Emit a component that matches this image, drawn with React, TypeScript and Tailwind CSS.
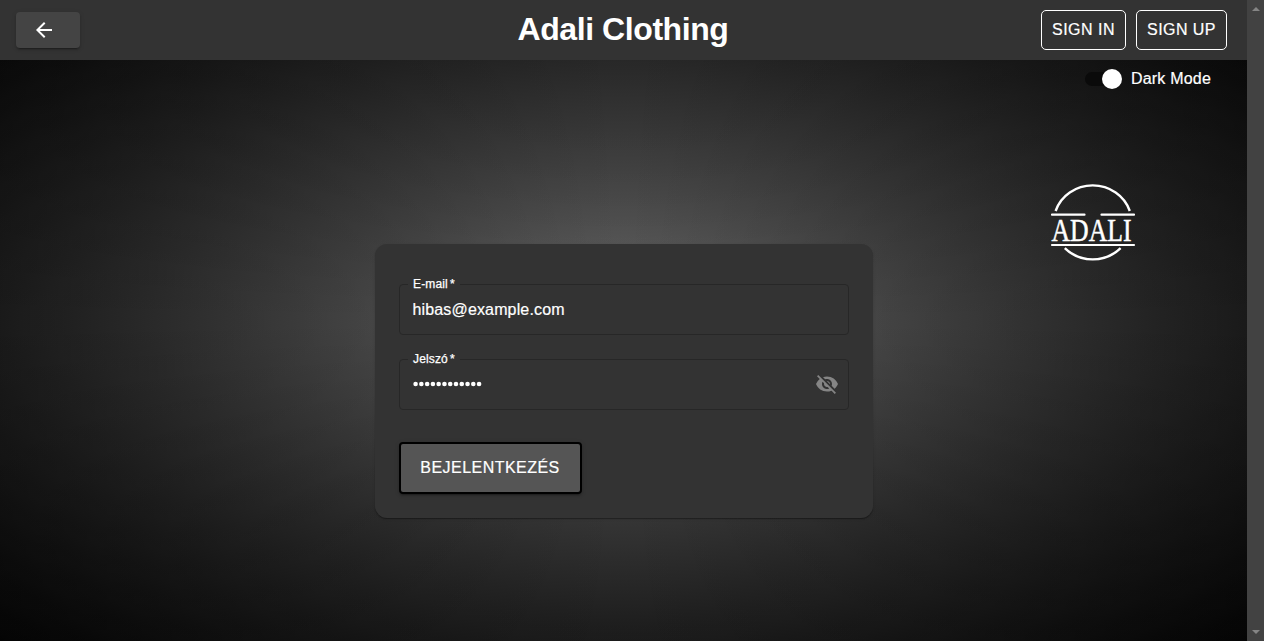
import type { ReactNode } from "react";
import { MdArrowBack, MdVisibilityOff } from "react-icons/md";

function Field({ label, children }: { label: string; children: ReactNode }) {
  return (
    <fieldset className="h-[56px] w-[450px] rounded-[4px] border border-[#272727] pl-[8px] pr-[9px]">
      <legend className="flex h-[11px] gap-[2px] pl-[5.500px] pr-[5px] text-[12px] leading-[11px] text-white [-webkit-text-stroke:0.25px_white]">
        <span className="tracking-[0.15px]">{label}</span>
        <span>*</span>
      </legend>
      <div className="flex h-[40px] items-center justify-between pl-[5px]">{children}</div>
    </fieldset>
  );
}

export default function App() {
  return (
    <div className="flex h-[641px] w-[1264px] overflow-hidden bg-black font-['Liberation_Sans',Arial,sans-serif] text-[16px] text-white">
      <div className="flex w-[1247px] flex-col bg-[linear-gradient(to_right,rgba(0,0,0,.3),transparent_50%,rgba(0,0,0,.3)),linear-gradient(to_bottom,rgba(0,0,0,.26),transparent_50%,rgba(0,0,0,.26)),radial-gradient(ellipse_at_center,#6a6a6a,#080808)]">
        <header className="grid h-[60px] shrink-0 grid-cols-[1fr_auto_1fr] items-center bg-[#333] pl-4 pr-5">
          <button className="flex h-9 w-16 items-center rounded-[4px] bg-[#444] pl-4 shadow-[0_3px_1px_-2px_rgba(0,0,0,.2),0_2px_2px_rgba(0,0,0,.14),0_1px_5px_rgba(0,0,0,.12)]">
            <MdArrowBack size={24} />
          </button>
          <h1 className="pb-[2px] pl-[3px] text-[32px] font-bold leading-[38px] tracking-[-0.43px]">Adali Clothing</h1>
          <div className="flex justify-end gap-[10px] [-webkit-text-stroke:0.2px_white]">
            <button className="h-10 w-[85px] rounded-[5px] border border-white tracking-[0.5px]">SIGN IN</button>
            <button className="h-10 w-[91px] rounded-[5px] border border-white tracking-[0.45px]">SIGN UP</button>
          </div>
        </header>
        <div className="flex h-[38px] items-center justify-end pr-9 [-webkit-text-stroke:0.2px_white]">
          <span className="flex h-[14px] w-[34px] items-center justify-end rounded-full bg-[#0a0a0a]">
            <span className="-mr-[3px] size-5 shrink-0 rounded-full bg-white" />
          </span>
          <span className="ml-3 pb-[1px] tracking-[0.2px]">Dark Mode</span>
        </div>
        <main className="grid flex-1 grid-cols-[1fr_498px_1fr] items-start pt-[86px]">
          <span />
          <form className="mt-[60px] flex h-[274px] flex-col rounded-[12px] bg-[#333] px-6 pt-[35px] shadow-[0_2px_1px_-1px_rgba(0,0,0,.2),0_1px_1px_rgba(0,0,0,.14),0_1px_3px_rgba(0,0,0,.12)]">
            <Field label="E-mail">
              <span className="tracking-[0.15px] [-webkit-text-stroke:0.2px_white]">hibas@example.com</span>
            </Field>
            <div className="h-[19px]" />
            <Field label="Jelszó">
              <svg width="70" height="6" viewBox="0 0 70 6" className="mb-[2px]" fill="white">
                {Array.from({ length: 12 }, (_, i) => (
                  <circle key={i} cx={2.6 + i * 5.77} cy={3} r={2.3} />
                ))}
              </svg>
              <MdVisibilityOff size={24} className="mb-[2px] text-[#858585]" />
            </Field>
            <button
              type="button"
              className="mt-8 h-[52px] w-[183px] rounded-[4px] border-2 border-black bg-[#555] tracking-[0.46px] shadow-[0_3px_1px_-2px_rgba(0,0,0,.2),0_2px_2px_rgba(0,0,0,.14),0_1px_5px_rgba(0,0,0,.12)] [-webkit-text-stroke:0.2px_white]"
            >
              BEJELENTKEZÉS
            </button>
          </form>
          <svg width="86" height="78" viewBox="0 0 86 78" className="ml-[177px] overflow-visible" fill="none" stroke="white">
            <path d="M5.600 27A39 37 0 0 1 79.800 27M14.800 64.200A39 37 0 0 0 70.600 64.200" strokeWidth="2.400" />
            <path d="M2 30.700H34.500M51.500 30.700H84M2 61H84" strokeWidth="2.200" strokeLinecap="round" />
            <text x="1.500" y="56.500" textLength="80" lengthAdjust="spacingAndGlyphs" fill="white" strokeWidth="0.500" fontFamily="Liberation Serif, serif" fontSize="30.500">
              ADALI
            </text>
          </svg>
        </main>
      </div>
      <div className="flex flex-1 flex-col items-center justify-between bg-[#424242] pb-[7px] pt-[7px]">
        <svg width="8" height="4"><path d="M0 4L4 0L8 4Z" fill="#858585" /></svg>
        <svg width="8" height="4"><path d="M0 0H8L4 4Z" fill="#858585" /></svg>
      </div>
    </div>
  );
}
